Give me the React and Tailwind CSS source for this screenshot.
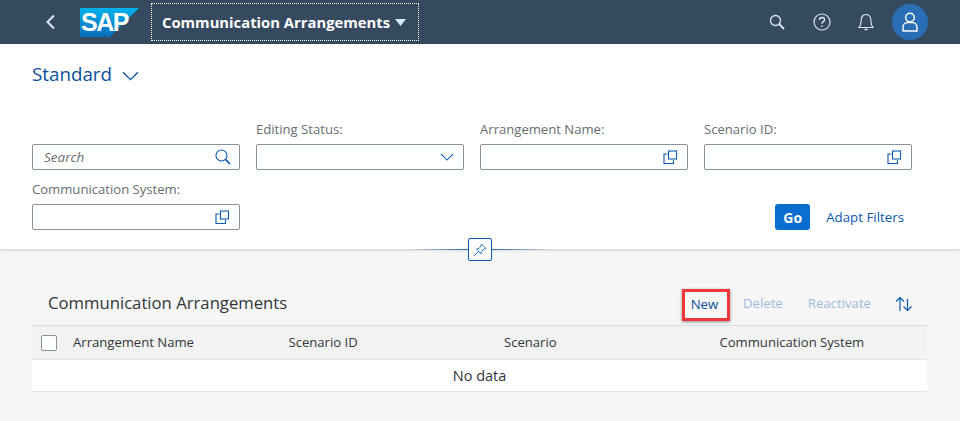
import React from "react";

const Copy = () => (
  <svg width="15" height="15" viewBox="0 0 15 15" fill="none" stroke="#0a5ab0" strokeWidth="1.1">
    <path d="M4.500 4H1v9.500h9.500V10" />
    <rect x="5.500" y="1" width="8" height="8" />
  </svg>
);

const Field = ({ label, children, italic }) => (
  <div className="flex flex-col w-[208px]">
    <div className="h-[26px] pt-[1px] text-[13.100px] leading-[20px] text-[#6a6d70]">{label}</div>
    <div className="h-[26px] border border-[#89919a] rounded-[2px] bg-white flex items-center justify-between pl-[11px] pr-[9px]">
      <span className="text-[13.500px] italic text-[#6a6d70]">{italic}</span>
      {children}
    </div>
  </div>
);

const Chevron = ({ w = 16, h = 9, c = "#0a5ab0" }) => (
  <svg width={w} height={h} viewBox="0 0 16 9" fill="none" stroke={c} strokeWidth="1.2">
    <path d="M1 1l7 7 7-7" />
  </svg>
);

export default function App() {
  return (
    <div className="w-[960px] h-[421px] overflow-hidden bg-[#f6f6f6] font-['Open_Sans','Noto_Sans',sans-serif] relative">
      <header className="h-[44px] bg-[#354a5f] flex items-center pl-[45px] pr-[32px]">
        <svg width="11" height="16" viewBox="0 0 11 16" fill="none" stroke="#d6e8fa" strokeWidth="2" className="mr-[24px]">
          <path d="M9 1.500L2.500 8 9 14.500" />
        </svg>
        <div className="relative w-[59px] h-[29px] mr-[12px] shrink-0">
          <svg width="59" height="29" viewBox="0 0 59 29" className="absolute inset-0">
            <defs>
              <linearGradient id="sapg" x1="0" y1="0" x2="0" y2="1">
                <stop offset="0" stopColor="#00b1eb" />
                <stop offset="1" stopColor="#0a6cbb" />
              </linearGradient>
            </defs>
            <path d="M0 0H59L30 29H0Z" fill="url(#sapg)" />
          </svg>
          <span className="absolute left-[1px] top-[0px] text-[25px] leading-[28px] font-bold text-white tracking-[-1.500px] font-['Liberation_Sans',sans-serif]">SAP</span>
        </div>
        <div className="w-[268px] h-[38px] border border-dotted border-white flex items-center pl-[10px] gap-[5px]">
          <span className="text-[14.800px] font-bold text-white whitespace-nowrap">Communication Arrangements</span>
          <svg width="11" height="7" viewBox="0 0 11 7"><path d="M0 0h11L5.500 7z" fill="#d1e8ff" /></svg>
        </div>
        <div className="ml-auto flex items-center">
          <svg width="16" height="16" viewBox="0 0 16 16" fill="none" stroke="#d6e8fa" strokeWidth="1.3" className="mr-[28px]">
            <circle cx="6.500" cy="6.500" r="5" />
            <path d="M10 10l5 5" strokeWidth="1.800" />
          </svg>
          <svg width="18" height="18" viewBox="0 0 18 18" fill="none" stroke="#d6e8fa" strokeWidth="1.2" className="mr-[27px]">
            <circle cx="9" cy="9" r="8" />
            <path d="M6.500 7c0-1.600 1.100-2.500 2.600-2.500s2.500 1 2.500 2.200c0 1.900-2.600 2-2.600 4" strokeWidth="1.400" />
            <path d="M9 12.500v1.600" strokeWidth="1.500" />
          </svg>
          <svg width="16" height="18" viewBox="0 0 16 18" fill="none" stroke="#d6e8fa" strokeWidth="1.2" className="mr-[18px]">
            <path d="M1 14.500c1.500-1.500 2-3 2-6C3 4 5 1.500 8 1.500S13 4 13 8.500c0 3 .5 4.500 2 6z" />
            <path d="M6.500 16.500h3" strokeWidth="1.500" />
          </svg>
          <div className="w-[36px] h-[36px] rounded-full bg-[#2a6eb5] flex items-center justify-center">
            <svg width="16" height="20" viewBox="0 0 16 20" fill="none" stroke="#ffffff" strokeWidth="1.4">
              <circle cx="8" cy="5.500" r="4.300" />
              <path d="M1 19v-3.500C1 12.500 3 10.500 5.500 10.500h5c2.500 0 4.500 2 4.500 5V19z" />
            </svg>
          </div>
        </div>
      </header>

      <section className="h-[205px] bg-white shadow-[0_1px_3px_rgba(0,0,0,0.18)] px-[32px] flex flex-col relative">
        <div className="h-[74px] pt-[16px] flex items-start gap-[10px] shrink-0">
          <span className="text-[18.800px] leading-[28px] text-[#0a4f9a]">Standard</span>
          <span className="pt-[11px]"><Chevron w={17} h={10} c="#0a4f9a" /></span>
        </div>
        <div className="flex gap-[16px]">
          <Field italic="Search">
            <svg width="16" height="16" viewBox="0 0 16 16" fill="none" stroke="#0a5ab0" strokeWidth="1.1" className="-mr-[1px]">
              <circle cx="6.500" cy="6.500" r="5.500" />
              <path d="M10.500 10.500l4.500 4.500" strokeWidth="1.700" />
            </svg>
          </Field>
          <Field label="Editing Status:">
            <Chevron w={14} h={8} />
          </Field>
          <Field label="Arrangement Name:"><Copy /></Field>
          <Field label="Scenario ID:"><Copy /></Field>
        </div>
        <div className="flex items-end mt-[8px]">
          <Field label="Communication System:"><Copy /></Field>
          <div className="ml-auto flex items-center gap-[16px] pr-[24px]">
            <button className="w-[35px] h-[26px] bg-[#0a6ed1] rounded-[3px] text-white text-[14px] font-bold flex items-center justify-center">Go</button>
            <span className="pt-[1px] text-[13.300px] text-[#0a5ab0]">Adapt Filters</span>
          </div>
        </div>
        <div className="absolute left-[407px] top-[194px] w-[146px] h-[23px] flex items-center justify-center">
          <div className="absolute inset-x-0 top-[11px] h-[1px] bg-gradient-to-r from-transparent via-[#0a4f9a] to-transparent" />
          <div className="relative w-[24px] h-[23px] bg-white border border-[#0a5ab0] rounded-[2px] flex items-center justify-center">
            <svg width="14" height="14" viewBox="0 0 14 14" fill="none" stroke="#2e7bc9" strokeWidth="1">
              <path d="M8.500 1l4.500 4.500-2 .5-2.500 2.500-.5 2.500L3.500 6l2.500-.5L8 3z" />
              <path d="M5.500 8.500L1 13" />
            </svg>
          </div>
        </div>
      </section>

      <section className="pl-[32px] pr-[33px] pt-[34px] relative">
        <div className="h-[40px] flex items-center pl-[16px] pr-[14px]">
          <h2 className="text-[16.700px] text-[#32363a]">Communication Arrangements</h2>
          <div className="ml-auto mt-[1px] flex items-center text-[13.200px]">
            <div className="w-[48px] h-[32px] mt-[3px] mr-[13px] pr-[3px] border-[3px] border-[#f0353b] shadow-[0_1px_3px_rgba(0,0,0,0.45)] flex items-center justify-center text-[#0a4f9a]">New</div>
            <span className="text-[#9dbbdc] mr-[25px]">Delete</span>
            <span className="text-[#9dbbdc] mr-[24px]">Reactivate</span>
            <svg width="18" height="16" viewBox="0 0 18 16" fill="none" stroke="#0a5ab0" strokeWidth="1.200">
              <path d="M5 15V1.500M1 5.500l4-4 4 4" />
              <path d="M12.500 3v11.500M8.500 10.500l4 4 4-4" />
            </svg>
          </div>
        </div>
        <div className="mt-[2px] pt-[1px] border-t border-[#dcdcdc] grid grid-cols-[33px_1fr_1fr_1fr_1fr] items-center h-[35px] bg-[#f2f2f2] border-b border-b-[#e5e5e5] text-[13.100px] text-[#32363a]">
          <div className="pl-[9px]"><div className="w-[16px] h-[16px] bg-white border border-[#89919a] rounded-[2px]" /></div>
          <div className="pl-[8px]">Arrangement Name</div>
          <div className="pl-[8px]">Scenario ID</div>
          <div className="pl-[8px]">Scenario</div>
          <div className="pl-[8px]">Communication System</div>
        </div>
        <div className="h-[32px] pt-[1px] bg-white border-b border-[#e5e5e5] flex items-center justify-center text-[14.500px] text-[#32363a]">No data</div>
      </section>
    </div>
  );
}
